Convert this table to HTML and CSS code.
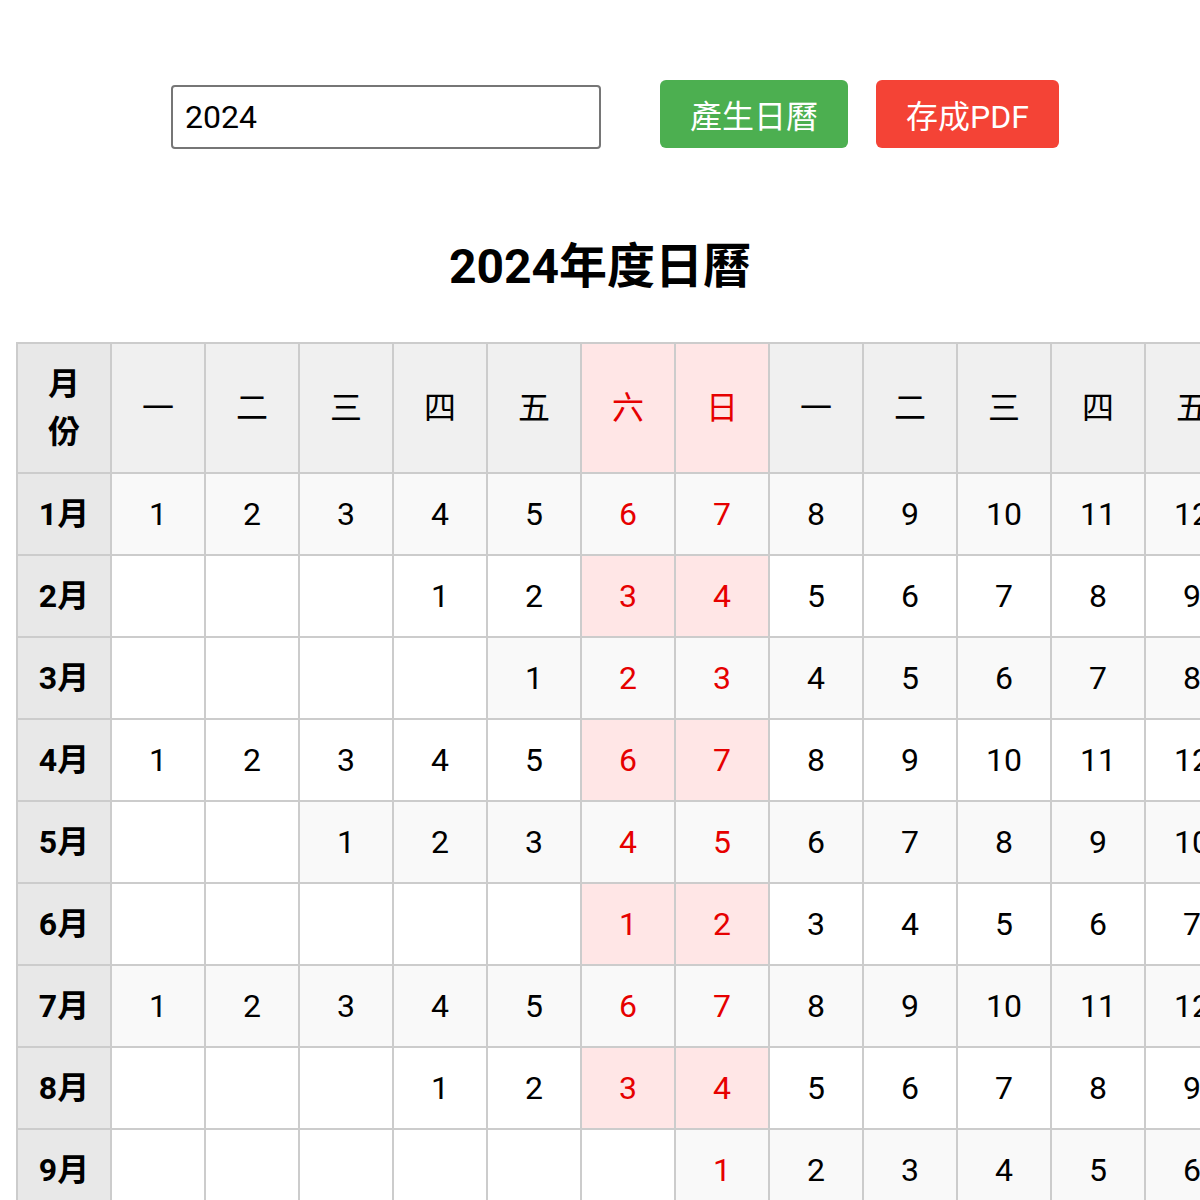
FILE: index.html
```html
<!DOCTYPE html>
<html lang="zh-Hant">
<head>
<meta charset="utf-8">
<title>2024年度日曆</title>
<link rel="stylesheet" href="styles.css">
</head>
<body>
<div class="controls">
  <input class="year-input" type="text" value="2024">
  <button class="btn btn-generate" type="button">產生日曆</button>
  <button class="btn btn-pdf" type="button">存成PDF</button>
</div>
<h1 class="title">2024年度日曆</h1>
<div class="table-wrap">
  <table class="calendar" id="calendar"></table>
</div>
<script src="script.js"></script>
</body>
</html>
```
FILE: styles.css
```css
html, body {
  margin: 0;
  padding: 0;
  background: #fff;
}
body {
  font-family: Roboto, "Noto Sans CJK TC", sans-serif;
  font-size: 32px;
  color: #000;
}
.controls {
  display: flex;
  align-items: flex-start;
  padding: 80px 0 0 171px;
}
.year-input {
  box-sizing: border-box;
  width: 430px;
  height: 64px;
  margin-top: 5px;
  padding: 0 12px;
  border: 2px solid #767676;
  border-radius: 4px;
  font-family: Roboto, "Noto Sans CJK TC", sans-serif;
  font-size: 32px;
  color: #000;
  background: #fff;
  outline: none;
}
.btn {
  box-sizing: border-box;
  height: 68px;
  padding: 0 30px;
  border: none;
  border-radius: 6px;
  font-family: Roboto, "Noto Sans CJK TC", sans-serif;
  font-size: 32px;
  color: #fff;
  cursor: pointer;
}
.btn-generate {
  margin-left: 59px;
  background: #4caf50;
}
.btn-pdf {
  margin-left: 28px;
  background: #f44336;
}
.title {
  margin: 82px 0 39px;
  font-size: 48px;
  line-height: 72px;
  font-weight: 700;
  text-align: center;
}
.table-wrap {
  overflow: hidden;
  padding-left: 16px;
}
.calendar {
  width: 3574px;
  border-collapse: collapse;
  table-layout: fixed;
}
.calendar th,
.calendar td {
  border: 2px solid #cccccc;
  padding: 16px;
  line-height: 48px;
  text-align: center;
  vertical-align: middle;
  background: #fff;
  font-weight: 400;
  white-space: normal;
}
.calendar .col-month { width: 94px; }
.calendar .col-day { width: 94px; }
.calendar th.corner {
  background: #e8e8e8;
  font-weight: 700;
}
.calendar th.wd {
  background: #f0f0f0;
}
.calendar th.month {
  background: #e8e8e8;
  font-weight: 700;
  white-space: nowrap;
}
.calendar tr.odd td.day {
  background: #f9f9f9;
}
.calendar th.wd.weekend,
.calendar td.day.weekend {
  background: #ffe6e6;
  color: #e60000;
}
```
FILE: script.js
```js
(function () {
  var table = document.getElementById('calendar');
  var year = 2024;
  var names = ['一', '二', '三', '四', '五', '六', '日'];
  var cols = 37;
  var html = '<colgroup><col class="col-month">';
  for (var c = 0; c < cols; c++) html += '<col class="col-day">';
  html += '</colgroup><thead><tr><th class="corner">月份</th>';
  for (var i = 0; i < cols; i++) {
    var w = i % 7;
    html += '<th class="wd' + (w >= 5 ? ' weekend' : '') + '">' + names[w] + '</th>';
  }
  html += '</tr></thead><tbody>';
  for (var m = 0; m < 12; m++) {
    var first = new Date(year, m, 1).getDay();
    var offset = (first + 6) % 7;
    var days = new Date(year, m + 1, 0).getDate();
    html += '<tr class="' + (m % 2 === 0 ? 'odd' : 'even') + '"><th class="month">' + (m + 1) + '月</th>';
    for (var k = 0; k < cols; k++) {
      var d = k - offset + 1;
      if (d >= 1 && d <= days) {
        var wd = k % 7;
        html += '<td class="day' + (wd >= 5 ? ' weekend' : '') + '">' + d + '</td>';
      } else {
        html += '<td class="empty"></td>';
      }
    }
    html += '</tr>';
  }
  html += '</tbody>';
  table.innerHTML = html;
})();
```
